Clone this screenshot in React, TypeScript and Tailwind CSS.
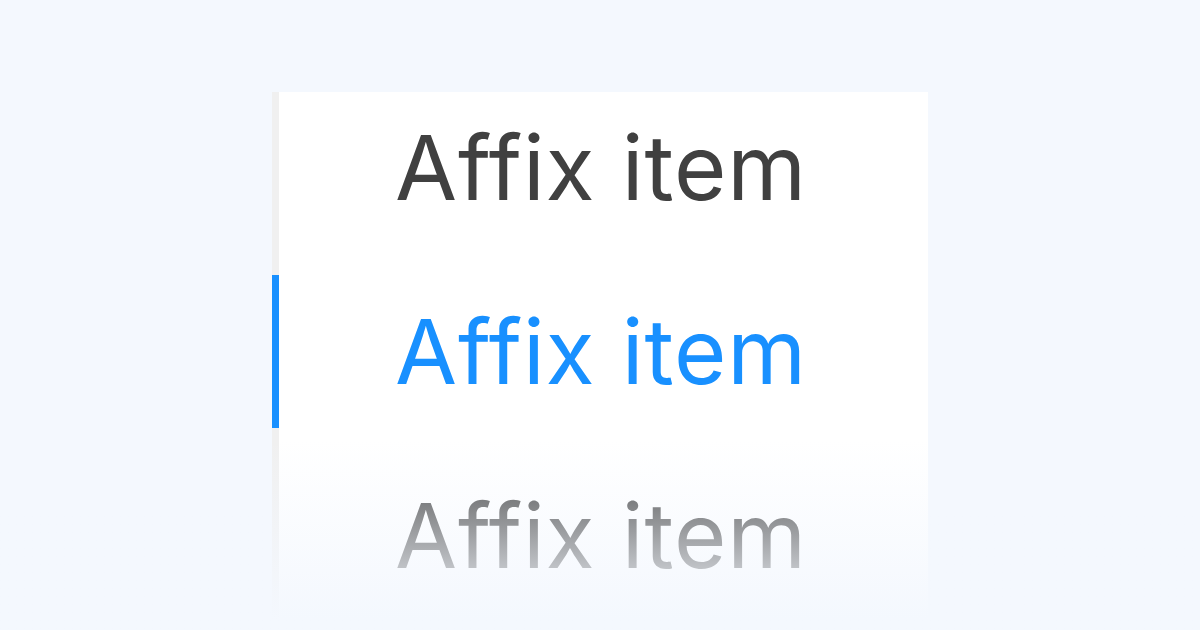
const items = [
  { label: "Affix item", active: false },
  { label: "Affix item", active: true },
  { label: "Affix item", active: false },
];

export default function App() {
  return (
    <div
      className="relative flex h-[630px] w-[1200px] justify-center overflow-hidden bg-[#f4f8fe] pt-[92px]"
      style={{ fontFamily: "Inter, 'Noto Sans', sans-serif" }}
    >
      {/* Anchor card — grey rail + list */}
      <div className="flex h-[540px] w-[656px] bg-white">
        <div className="relative w-[7px] shrink-0 bg-[#f0f0f0]">
          {/* active ink */}
          <span className="absolute left-0 top-[183px] h-[153px] w-[7px] bg-[#1890ff]" />
        </div>
        <div className="flex-1 overflow-hidden">
          <ul className="-mt-[16px] pl-[116px]">
            {items.map((item, i) => (
              <li
                key={i}
                className={
                  item.active
                    ? "h-[184px] text-[90px] leading-[184px] tracking-[0.9px] text-[#1890ff]"
                    : "h-[184px] text-[90px] leading-[184px] tracking-[0.9px] text-[#404040]"
                }
              >
                {item.label}
              </li>
            ))}
          </ul>
        </div>
      </div>

      {/* bottom fade */}
      <div className="pointer-events-none absolute inset-x-0 bottom-0 h-[190px] bg-gradient-to-b from-[#f4f8fe]/0 to-[#f4f8fe] to-[95%]" />
    </div>
  );
}
